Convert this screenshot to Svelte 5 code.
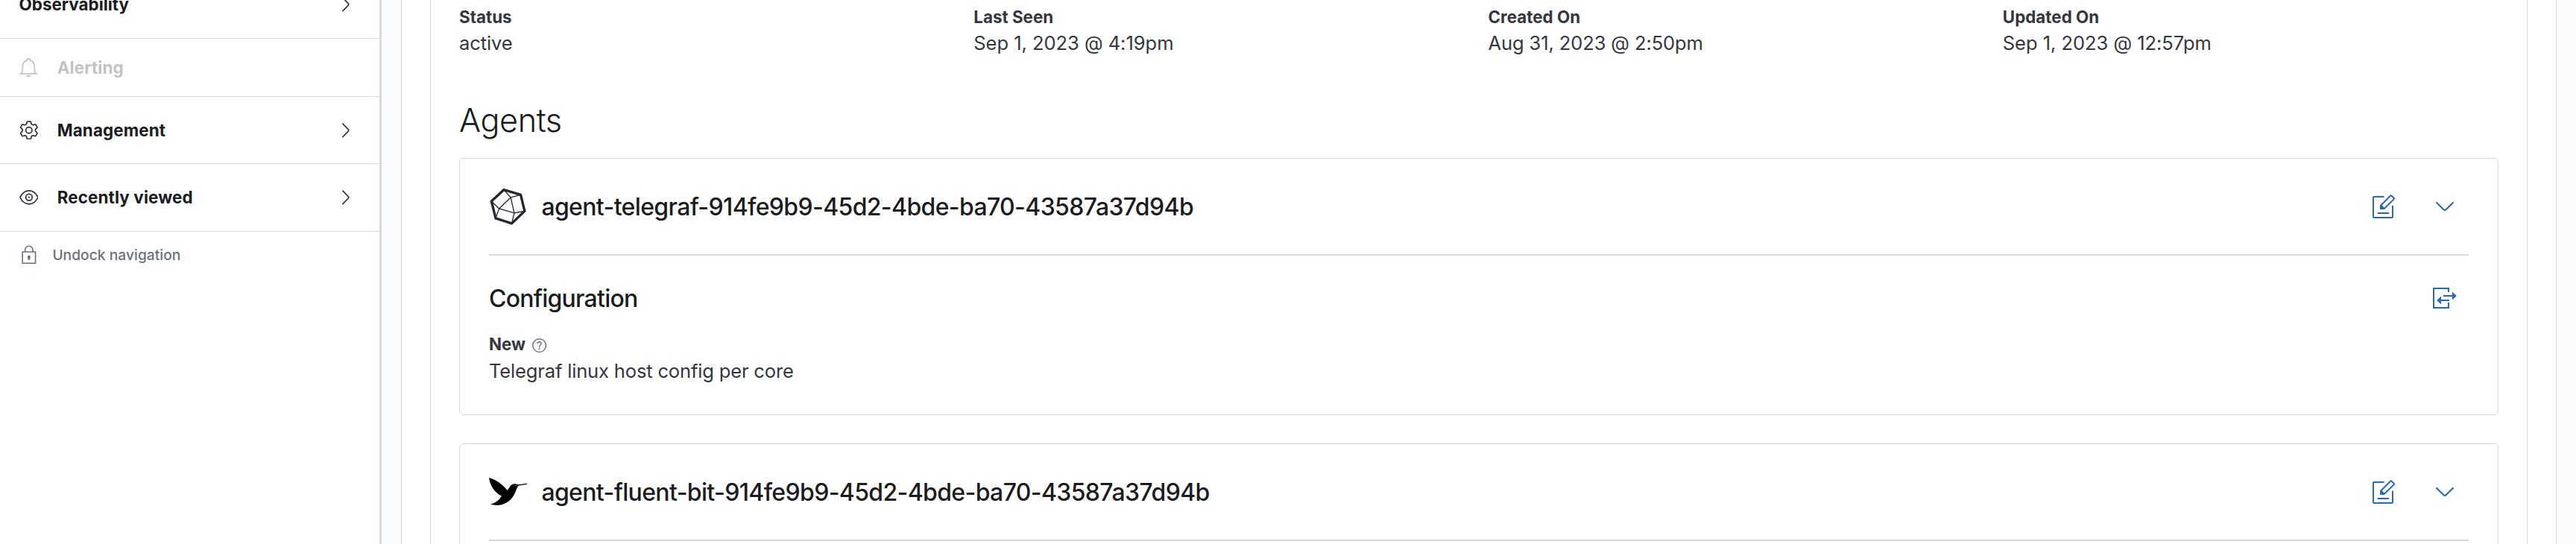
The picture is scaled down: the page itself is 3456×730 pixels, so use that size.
<script>
  const sections = [
    { label: 'Observability', arrow: true, height: 90 },
    { label: 'Alerting', icon: 'bell', disabled: true, height: 77 },
    { label: 'Management', icon: 'gear', arrow: true, height: 89 },
    { label: 'Recently viewed', icon: 'eye', arrow: true, height: 90 },
  ];

  const details = [
    { term: 'Status', value: 'active' },
    { term: 'Last Seen', value: 'Sep 1, 2023 @ 4:19pm', sep: true },
    { term: 'Created On', value: 'Aug 31, 2023 @ 2:50pm' },
    { term: 'Updated On', value: 'Sep 1, 2023 @ 12:57pm', sep: true },
  ];

  const agents = [
    { name: 'agent-telegraf-914fe9b9-45d2-4bde-ba70-43587a37d94b', logo: 'telegraf', config: 'Telegraf linux host config per core' },
    { name: 'agent-fluent-bit-914fe9b9-45d2-4bde-ba70-43587a37d94b', logo: 'fluent', config: null },
  ];

  // Six-toothed gear outline centred on (8, 8)
  const polar = (r, deg) => {
    const a = (deg * Math.PI) / 180;
    return `${(8 + r * Math.cos(a)).toFixed(2)} ${(8 + r * Math.sin(a)).toFixed(2)}`;
  };
  let gear = '';
  for (let k = 0; k < 6; k++) {
    const a = k * 60 - 90;
    gear += `${k ? 'L' : 'M'}${polar(5.6, a - 22)}L${polar(6.9, a - 14)}Q${polar(7.5, a - 13)} ${polar(7.4, a - 8)}L${polar(7.4, a + 8)}Q${polar(7.5, a + 13)} ${polar(6.9, a + 14)}L${polar(5.6, a + 22)}Q${polar(5.2, a + 30)} ${polar(5.6, a + 38)}`;
  }
  gear += 'Z';
</script>

{#snippet chevron(dir)}
  <svg class="chevron {dir}" viewBox="0 0 16 16" fill="currentColor">
    {#if dir === 'right'}
      <path d="M5.157 13.069l4.611-4.685a.546.546 0 000-.768L5.158 2.93a.552.552 0 010-.771.53.53 0 01.759 0l4.61 4.684a1.65 1.65 0 010 2.312l-4.61 4.684a.53.53 0 01-.76 0 .552.552 0 010-.771z" />
    {:else}
      <path d="M13.069 5.157L8.384 9.768a.546.546 0 01-.768 0L2.93 5.158a.552.552 0 00-.771 0 .53.53 0 000 .759l4.684 4.61c.641.631 1.672.63 2.312 0l4.684-4.61a.53.53 0 000-.76.552.552 0 00-.771 0z" />
    {/if}
  </svg>
{/snippet}

<div class="page">
  <nav class="sidebar">
    {#each sections as s}
      <div class="section" class:disabled={s.disabled} style="height:{s.height}px">
        {#if s.icon}
          <svg class="nav-icon" viewBox="0 0 16 16" fill="none" stroke="currentColor">
            {#if s.icon === 'bell'}
              <path d="M.2 13.100H15.100M1.900 12.900C2.700 11.600 2.500 9.400 2.700 7 2.900 4.100 4 2.600 6 2.100 6.200.1 9.100.1 9.300 2.100c2 .5 3.100 2 3.300 4.900.2 2.400 0 4.600.8 5.900" />
              <path d="M5.600 14.400h4.100c-.2 1-1.100 1.600-2.050 1.600S5.800 15.400 5.600 14.400z" fill="currentColor" stroke="none" />
            {:else if s.icon === 'gear'}
              <path d={gear} />
              <circle cx="8" cy="8" r="2.6" />
            {:else}
              <path d="M.8 7.500C2.800 3.800 5 2.400 8.100 2.400s5.300 1.400 7.300 5.100q.2.500 0 1C13.400 12.200 11.200 13.600 8.100 13.600S2.800 12.200.8 8.500q-.2-.5 0-1z" />
              <circle cx="8.1" cy="8" r="2.7" />
              <circle cx="8.1" cy="8" r=".7" fill="currentColor" stroke="none" />
            {/if}
          </svg>
        {/if}
        <span class="section-label">{s.label}</span>
        {#if s.arrow}{@render chevron('right')}{/if}
      </div>
    {/each}
    <div class="undock">
      <svg class="nav-icon" viewBox="0 0 16 16" fill="none" stroke="currentColor">
        <path d="M2.600 5.600h10.900v9.600H2.600zM4.800 5.600V4a3.250 3.250 0 016.500 0v1.600" />
        <path d="M8.050 8.600a1.300 1.300 0 01.9 2.200v1.500H7.100v-1.500a1.300 1.300 0 01.95-2.200z" fill="currentColor" stroke="none" />
      </svg>
      <span>Undock navigation</span>
    </div>
  </nav>

  <main class="outer">
    <section class="inner">
      <dl class="details">
        {#each details as d}
          <div>
            <dt>{d.term}</dt>
            <dd class:sep={d.sep}>{d.value}</dd>
          </div>
        {/each}
      </dl>

      <h2>Agents</h2>

      {#each agents as agent}
        <article class="card">
          <header>
            {#if agent.logo === 'telegraf'}
              <svg class="logo" viewBox="0 0 154 154" fill="none" stroke="#242630">
                <path stroke-width="10" d="M60 11L128 31 144 97 92 147 27 126 10 57z" />
                <path stroke-width="4" d="M88 42L60 11M88 42L128 31M88 42L41 87 102 105zM41 87L10 57M41 87L27 126M102 105L144 97M102 105L92 147" />
              </svg>
            {:else}
              <svg class="logo" viewBox="0 0 154 154">
                <path d="M0 21C30 29 58 51 74 72 84 62 87 46 104 46 111 46 115 49 120 49L153 44V48L122 53C116 56 114 61 111 68 101 99 84 121 52 130 35 134 16 132 6 128 25 125 43 110 51 95 22 81 4 52 0 21z" />
                <circle cx="108" cy="53" r="2" fill="#fff" />
              </svg>
            {/if}
            <h3>{agent.name}</h3>
            <button aria-label="Edit">
              <svg viewBox="0 0 16 16" fill="none" stroke="currentColor">
                <path stroke-linecap="round" d="M7.900 1.500H1.500Q1 1.500 1 2v13q0 .5.5.5h12q.5 0 .5-.5V7.700M4.200 12.500h7" />
                <path stroke-linejoin="round" d="M6 9.500V7.400L12.500.9q.4-.4.800 0l1.500 1.500q.4.400 0 .8L8.300 9.500z" />
                <path d="M5.500 7.300L6.800 7.100 8.300 8.700 8.200 10H6Q5.500 10 5.500 9.500z" fill="currentColor" stroke="none" />
              </svg>
            </button>
            <button aria-label="Toggle">{@render chevron('down')}</button>
          </header>
          <hr />
          {#if agent.config}
            <div class="config-head">
              <h3>Configuration</h3>
              <button aria-label="Switch configuration">
                <svg viewBox="0 0 16 16" fill="none" stroke="currentColor">
                  <path d="M10.500 4V1.500H.5v13h10V11M7 6.500h6.200M5.300 9.500H11" />
                  <path d="M13 3.700L15.900 6.500 13 9.300zM5.500 6.700L2.600 9.500l2.900 2.800z" fill="currentColor" stroke="none" />
                </svg>
              </button>
            </div>
            <div class="term">
              <span>New</span>
              <svg viewBox="0 0 16 16" fill="none" stroke="currentColor" stroke-width="1.150">
                <circle cx="8" cy="8" r="7.400" />
                <path d="M5.800 6.100C5.900 4.700 6.800 4 8 4s2.200.8 2.200 1.900c0 1.700-2.200 1.700-2.200 3.800" />
                <circle cx="8" cy="11.700" r=".9" fill="currentColor" stroke="none" />
              </svg>
            </div>
            <p>{agent.config}</p>
          {/if}
        </article>
      {/each}
    </section>
  </main>
</div>

<style>
  :global(body) { margin: 0; background: #fafbfd; }
  .page {
    display: flex;
    box-sizing: border-box;
    width: 100%;
    height: 730px;
    overflow: hidden;
    font-family: Inter, sans-serif;
    color: #343741;
    background: #fafbfd;
  }
  h2, h3, p, dl, dd { margin: 0; }

  .sidebar {
    flex: none;
    width: 509px;
    margin-top: -39px;
    border-right: 3px solid #d3dae6;
    background: #fff;
  }
  .section {
    display: flex;
    align-items: center;
    padding: 0 32px 0 25.6px;
    border-bottom: 1px solid #d3dae6;
    font-size: 22.4px;
    font-weight: 700;
    letter-spacing: 0.005em;
    line-height: 32px;
    color: #343741;
  }
  .section-label { flex: 1; color: #1a1c21; }
  .section:first-child { letter-spacing: 0; }
  .section.disabled, .disabled .section-label { color: #c2c3c6; }
  .nav-icon { flex: none; width: 25.6px; height: 25.6px; margin-right: 25.6px; }
  .section .nav-icon { stroke-width: 1.1; }
  .chevron.right { width: 25.6px; height: 25.6px; }
  .undock {
    display: flex;
    align-items: center;
    height: 62px;
    padding-left: 25.6px;
    font-size: 19.2px;
    font-weight: 500;
    letter-spacing: 0.002em;
    color: #69707d;
  }
  .undock .nav-icon { margin-right: 19.2px; }

  .outer {
    flex: 1;
    height: 730px;
    box-sizing: border-box;
    margin: 0 26px;
    padding: 0 38px;
    border: solid #d3dae6;
    border-width: 0 1px;
    background: #fff;
  }
  .inner {
    height: 730px;
    box-sizing: border-box;
    padding: 7px 38px 0;
    border: solid #d3dae6;
    border-width: 0 1px;
  }
  .details {
    display: grid;
    grid-template-columns: repeat(4, 1fr);
    column-gap: 25px;
  }
  dt, .term { font-size: 22.4px; font-weight: 700; line-height: 32px; }
  dd, p { font-size: 25.6px; line-height: 37px; letter-spacing: -0.006em; }
  dd.sep { letter-spacing: -0.003em; }
  h2 {
    margin: 61px 0 27px;
    font-size: 43.2px;
    font-weight: 300;
    line-height: 48px;
    letter-spacing: -0.009em;
    color: #1a1c21;
  }
  h3 {
    flex: 1;
    padding-top: 1px;
    font-size: 32px;
    font-weight: 500;
    line-height: 40px;
    letter-spacing: -0.02em;
    color: #1a1c21;
  }
  .config-head h3 { letter-spacing: -0.0237em; }

  .card {
    box-sizing: border-box;
    height: 345px;
    margin-bottom: 38px;
    padding: 0 39px;
    border: 1px solid #d3dae6;
    border-radius: 6px;
  }
  header { display: flex; align-items: center; height: 128px; }
  .logo { width: 51.2px; height: 51.2px; margin-right: 19.2px; }
  hr { height: 2px; margin: 0; border: 0; background: #d3dae6; }
  button {
    display: flex;
    align-items: center;
    justify-content: center;
    width: 64px;
    height: 64px;
    padding: 0;
    border: 0;
    background: none;
    color: #2b69b1;
  }
  button + button { margin-left: 18px; }
  button svg, .chevron.down { width: 32px; height: 32px; }
  .config-head { display: flex; align-items: center; height: 64px; margin-top: 25px; }
  .term { display: flex; align-items: center; margin-top: 14px; }
  .term svg { width: 19.2px; height: 19.2px; margin: 4px 0 0 9px; color: #69707d; }
  .card p { margin-top: 1px; line-height: 38px; letter-spacing: -0.0076em; }
</style>
